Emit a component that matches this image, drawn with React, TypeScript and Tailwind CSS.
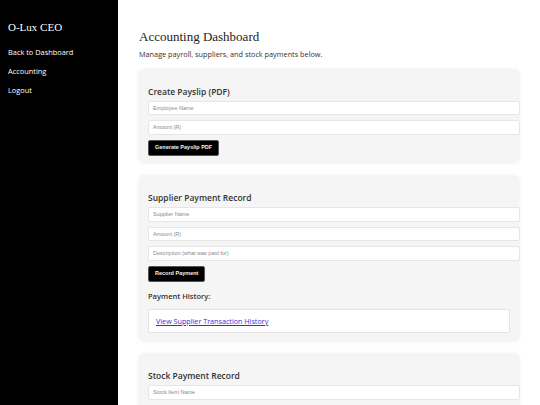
import React from "react";

const sans = "font-['Open_Sans',sans-serif]";
const serif = "font-['Liberation_Serif',serif]";
const inputFont = "font-['Liberation_Sans',Arial,sans-serif]";

const Field = ({ placeholder }: { placeholder: string }) => (
  <input
    type="text"
    placeholder={placeholder}
    className={`${inputFont} box-content block w-full h-[12.5px] px-[4px] mb-[5px] bg-white border border-[#e6e6e6] rounded-[2px] text-[5.5px] text-[#333] placeholder:text-[#8a8a8a] outline-none`}
  />
);

const ActionButton = ({ label }: { label: string }) => (
  <button
    className={`${inputFont} block h-[16px] px-[6px] bg-black text-[#f2f2f2] text-[5.5px] font-bold rounded-[2px] border border-[#555]`}
  >
    {label}
  </button>
);

const Card = ({ title, children }: { title: string; children: React.ReactNode }) => (
  <section className="bg-[#f5f5f5] rounded-[5px] shadow-[0_1px_4px_rgba(0,0,0,0.08)] px-[9px] pt-[9px] pb-[6.5px] mb-[13px]">
    <h3 className="text-[8.5px] leading-[13px] font-semibold text-[#333] mt-[7px] mb-[3px]">
      {title}
    </h3>
    {children}
  </section>
);

export default function App() {
  return (
    <div className={`${sans} flex h-[405px] overflow-hidden bg-white text-[#333] text-[7px] leading-[11px]`}>
      <aside className="w-[118px] shrink-0 bg-black text-white px-[8px] pt-[19px]">
        <h2 className={`${serif} text-[11px] leading-[16px] mb-[12px]`}>O-Lux CEO</h2>
        <nav className="flex flex-col gap-[8px]">
          <a className="text-[7.4px] leading-[11px]">Back to Dashboard</a>
          <a className="text-[7.4px] leading-[11px]">Accounting</a>
          <a className="text-[7.4px] leading-[11px]">Logout</a>
        </nav>
      </aside>

      <main className="flex-1 px-[21px] pt-[27px]">
        <h1 className={`${serif} text-[13px] leading-[20px] text-[#222]`}>Accounting Dashboard</h1>
        <p className="text-[7.3px] leading-[11px] mt-[1.5px] mb-[9px]">
          Manage payroll, suppliers, and stock payments below.
        </p>

        <Card title="Create Payslip (PDF)">
          <Field placeholder="Employee Name" />
          <Field placeholder="Amount (R)" />
          <ActionButton label="Generate Payslip PDF" />
        </Card>

        <Card title="Supplier Payment Record">
          <Field placeholder="Supplier Name" />
          <Field placeholder="Amount (R)" />
          <Field placeholder="Description (what was paid for)" />
          <ActionButton label="Record Payment" />
          <h4 className="text-[7.5px] leading-[12px] font-semibold mt-[8px] mb-[7px]">
            Payment History:
          </h4>
          <div className="bg-white border border-[#e3e3e3] rounded-[2px] px-[7px] py-[6px] mb-[1px]">
            <a href="#" className="block text-[7.2px] leading-[10px] text-[#3730d9] underline">
              View Supplier Transaction History
            </a>
          </div>
        </Card>

        <Card title="Stock Payment Record">
          <Field placeholder="Stock Item Name" />
          <Field placeholder="Amount (R)" />
          <Field placeholder="Quantity" />
          <ActionButton label="Record Stock Payment" />
        </Card>
      </main>
    </div>
  );
}
